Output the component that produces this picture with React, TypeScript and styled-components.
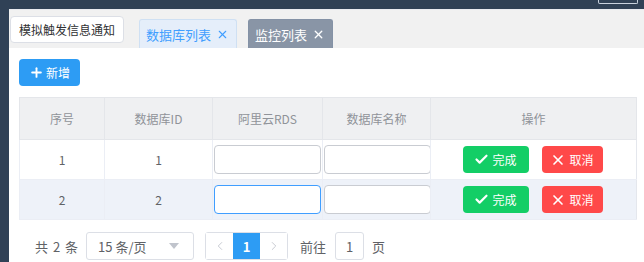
import styled, { createGlobalStyle } from "styled-components";
import { Check, X, Plus, ChevronLeft, ChevronRight } from "lucide-react";

const GlobalStyle = createGlobalStyle`
  body {
    margin: 0;
    font-family: "Noto Sans CJK SC", "Liberation Sans", sans-serif;
    font-size: 12px;
    color: #606266;
    background: #fff;
  }
`;

type Row = { no: number; dbId: number };

const rows: Row[] = [
  { no: 1, dbId: 1 },
  { no: 2, dbId: 2 },
];

const cols = [85, 108, 110, 108, 206];

const S = {
  Page: styled.div`
    display: flex;
    flex-direction: column;
    width: 644px;
    height: 262px;
    overflow: hidden;
  `,
  TopBar: styled.div`
    height: 9px;
    flex: none;
    background: #304156;
    display: flex;
    justify-content: flex-end;
    padding-right: 6px;
  `,
  TopBox: styled.div`
    width: 38px;
    height: 3px;
    border: 1px solid #c9d2de;
    border-top: none;
    border-radius: 0 0 2px 2px;
  `,
  Body: styled.div`
    flex: 1;
    display: flex;
    min-height: 0;
  `,
  Sidebar: styled.div`
    width: 9px;
    flex: none;
    background: #304156;
  `,
  Main: styled.div`
    flex: 1;
    display: flex;
    flex-direction: column;
  `,
  TabBar: styled.div`
    height: 39px;
    flex: none;
    background: #f1f1f1;
    border-top: 1px solid #e9ebf0;
    box-sizing: border-box;
    display: flex;
    align-items: flex-end;
    padding-left: 1px;
  `,
  NotifyButton: styled.button`
    align-self: flex-start;
    margin-top: 6px;
    height: 27px;
    width: 114px;
    padding: 0;
    border: 1px solid #dcdfe6;
    border-radius: 4px;
    background: #fff;
    color: #303133;
    font-family: inherit;
    font-size: 12px;
  `,
  Tab: styled.div<{ $active?: boolean }>`
    height: 29px;
    box-sizing: border-box;
    margin-left: ${(p) => (p.$active ? "11px" : "15px")};
    padding: 0 7px 0 6px;
    display: flex;
    align-items: center;
    gap: 5px;
    font-size: 13px;
    border-radius: 3px 3px 0 0;
    border: 1px solid ${(p) => (p.$active ? "#8492a6" : "#cfe0f3")};
    border-bottom: none;
    background: ${(p) => (p.$active ? "#8995a6" : "#e5eefa")};
    color: ${(p) => (p.$active ? "#fff" : "#409eff")};
  `,
  Content: styled.div`
    flex: 1;
    background: #fff;
    padding: 11px 8px 0 10px;
    display: flex;
    flex-direction: column;
    align-items: flex-start;
  `,
  AddButton: styled.button`
    height: 27px;
    width: 61px;
    padding: 0;
    border: none;
    border-radius: 4px;
    background: #2d9cf4;
    color: #fff;
    font-family: inherit;
    font-size: 12px;
    display: flex;
    align-items: center;
    justify-content: center;
    gap: 2px;
  `,
  Table: styled.table`
    margin-top: 11px;
    width: 617px;
    border-collapse: collapse;
    table-layout: fixed;
    border: 1px solid #e4e7ed;
  `,
  Th: styled.th`
    height: 41px;
    padding: 0;
    background: #eff0f2;
    border: 1px solid #e4e6ea;
    color: #909399;
    font-weight: normal;
    font-size: 12px;
    text-align: center;
  `,
  Tr: styled.tr<{ $alt?: boolean }>`
    background: ${(p) => (p.$alt ? "#eef2f9" : "#fff")};
  `,
  Td: styled.td`
    height: 40px;
    padding: 0 1px;
    border-bottom: 1px solid #ebeef5;
    border-left: 1px solid #ebeef5;
    text-align: center;
    font-size: 12px;
    color: #606266;
    box-sizing: border-box;
  `,
  Input: styled.input<{ $focus?: boolean }>`
    display: block;
    width: 107px;
    height: 29px;
    margin: 0 auto;
    box-sizing: border-box;
    border: 1px solid ${(p) => (p.$focus ? "#409eff" : "#c9ccd2")};
    border-radius: 4px;
    background: #fff;
    outline: none;
  `,
  Actions: styled.div`
    display: flex;
    justify-content: center;
    gap: 13px;
    padding-right: 2px;
  `,
  ActionButton: styled.button<{ $kind: "ok" | "cancel" }>`
    height: 27px;
    width: ${(p) => (p.$kind === "ok" ? "66px" : "61px")};
    padding: 0;
    border: none;
    border-radius: 4px;
    background: ${(p) => (p.$kind === "ok" ? "#13ce66" : "#ff4949")};
    color: #fff;
    font-family: inherit;
    font-size: 12px;
    display: flex;
    align-items: center;
    justify-content: center;
    gap: 3px;
  `,
  Pager: styled.div`
    margin-top: 12px;
    padding-left: 16px;
    display: flex;
    align-items: center;
    font-size: 13px;
    color: #606266;
  `,
  Total: styled.span`
    margin-right: 8px;
    word-spacing: 2px;
  `,
  Select: styled.div`
    width: 108px;
    height: 28px;
    box-sizing: border-box;
    border: 1px solid #dcdfe6;
    border-radius: 3px;
    display: flex;
    align-items: center;
    justify-content: space-between;
    padding: 0 14px 0 11px;
    color: #606266;
  `,
  Caret: styled.span`
    width: 0;
    height: 0;
    border-left: 5px solid transparent;
    border-right: 5px solid transparent;
    border-top: 6px solid #c0c4cc;
  `,
  Pages: styled.div`
    margin-left: 11px;
    display: flex;
    height: 28px;
    border: 1px solid #dcdfe6;
    border-radius: 3px;
    box-sizing: border-box;
  `,
  PageBtn: styled.div<{ $active?: boolean }>`
    width: 27px;
    display: flex;
    align-items: center;
    justify-content: center;
    background: ${(p) => (p.$active ? "#2d9cf4" : "#fff")};
    color: ${(p) => (p.$active ? "#fff" : "#c0c4cc")};
    font-weight: ${(p) => (p.$active ? "bold" : "normal")};
  `,
  Jump: styled.span`
    margin-left: 12px;
  `,
  JumpInput: styled.div`
    margin: 0 8px 0 9px;
    width: 29px;
    height: 28px;
    box-sizing: border-box;
    border: 1px solid #dcdfe6;
    border-radius: 3px;
    display: flex;
    align-items: center;
    justify-content: center;
  `,
};

export default function App() {
  return (
    <S.Page>
      <GlobalStyle />
      <S.TopBar>
        <S.TopBox />
      </S.TopBar>
      <S.Body>
        <S.Sidebar />
        <S.Main>
          <S.TabBar>
            <S.NotifyButton>模拟触发信息通知</S.NotifyButton>
            <S.Tab>
              数据库列表 <X size={13} strokeWidth={2} />
            </S.Tab>
            <S.Tab $active>
              监控列表 <X size={13} strokeWidth={2.5} />
            </S.Tab>
          </S.TabBar>
          <S.Content>
            <S.AddButton>
              <Plus size={15} strokeWidth={3} />
              新增
            </S.AddButton>
            <S.Table>
              <colgroup>
                {cols.map((w, i) => (
                  <col key={i} style={{ width: w }} />
                ))}
              </colgroup>
              <thead>
                <tr>
                  <S.Th>序号</S.Th>
                  <S.Th>数据库ID</S.Th>
                  <S.Th>阿里云RDS</S.Th>
                  <S.Th>数据库名称</S.Th>
                  <S.Th>操作</S.Th>
                </tr>
              </thead>
              <tbody>
                {rows.map((r, i) => (
                  <S.Tr key={r.no} $alt={i === 1}>
                    <S.Td>{r.no}</S.Td>
                    <S.Td>{r.dbId}</S.Td>
                    <S.Td>
                      <S.Input $focus={i === 1} />
                    </S.Td>
                    <S.Td>
                      <S.Input />
                    </S.Td>
                    <S.Td>
                      <S.Actions>
                        <S.ActionButton $kind="ok">
                          <Check size={15} strokeWidth={3.5} />
                          完成
                        </S.ActionButton>
                        <S.ActionButton $kind="cancel">
                          <X size={16} strokeWidth={2.5} />
                          取消
                        </S.ActionButton>
                      </S.Actions>
                    </S.Td>
                  </S.Tr>
                ))}
              </tbody>
            </S.Table>
            <S.Pager>
              <S.Total>共 2 条</S.Total>
              <S.Select>
                15 条/页
                <S.Caret />
              </S.Select>
              <S.Pages>
                <S.PageBtn>
                  <ChevronLeft size={14} strokeWidth={1.5} />
                </S.PageBtn>
                <S.PageBtn $active>1</S.PageBtn>
                <S.PageBtn>
                  <ChevronRight size={14} strokeWidth={1.5} />
                </S.PageBtn>
              </S.Pages>
              <S.Jump>前往</S.Jump>
              <S.JumpInput>1</S.JumpInput>
              页
            </S.Pager>
          </S.Content>
        </S.Main>
      </S.Body>
    </S.Page>
  );
}
